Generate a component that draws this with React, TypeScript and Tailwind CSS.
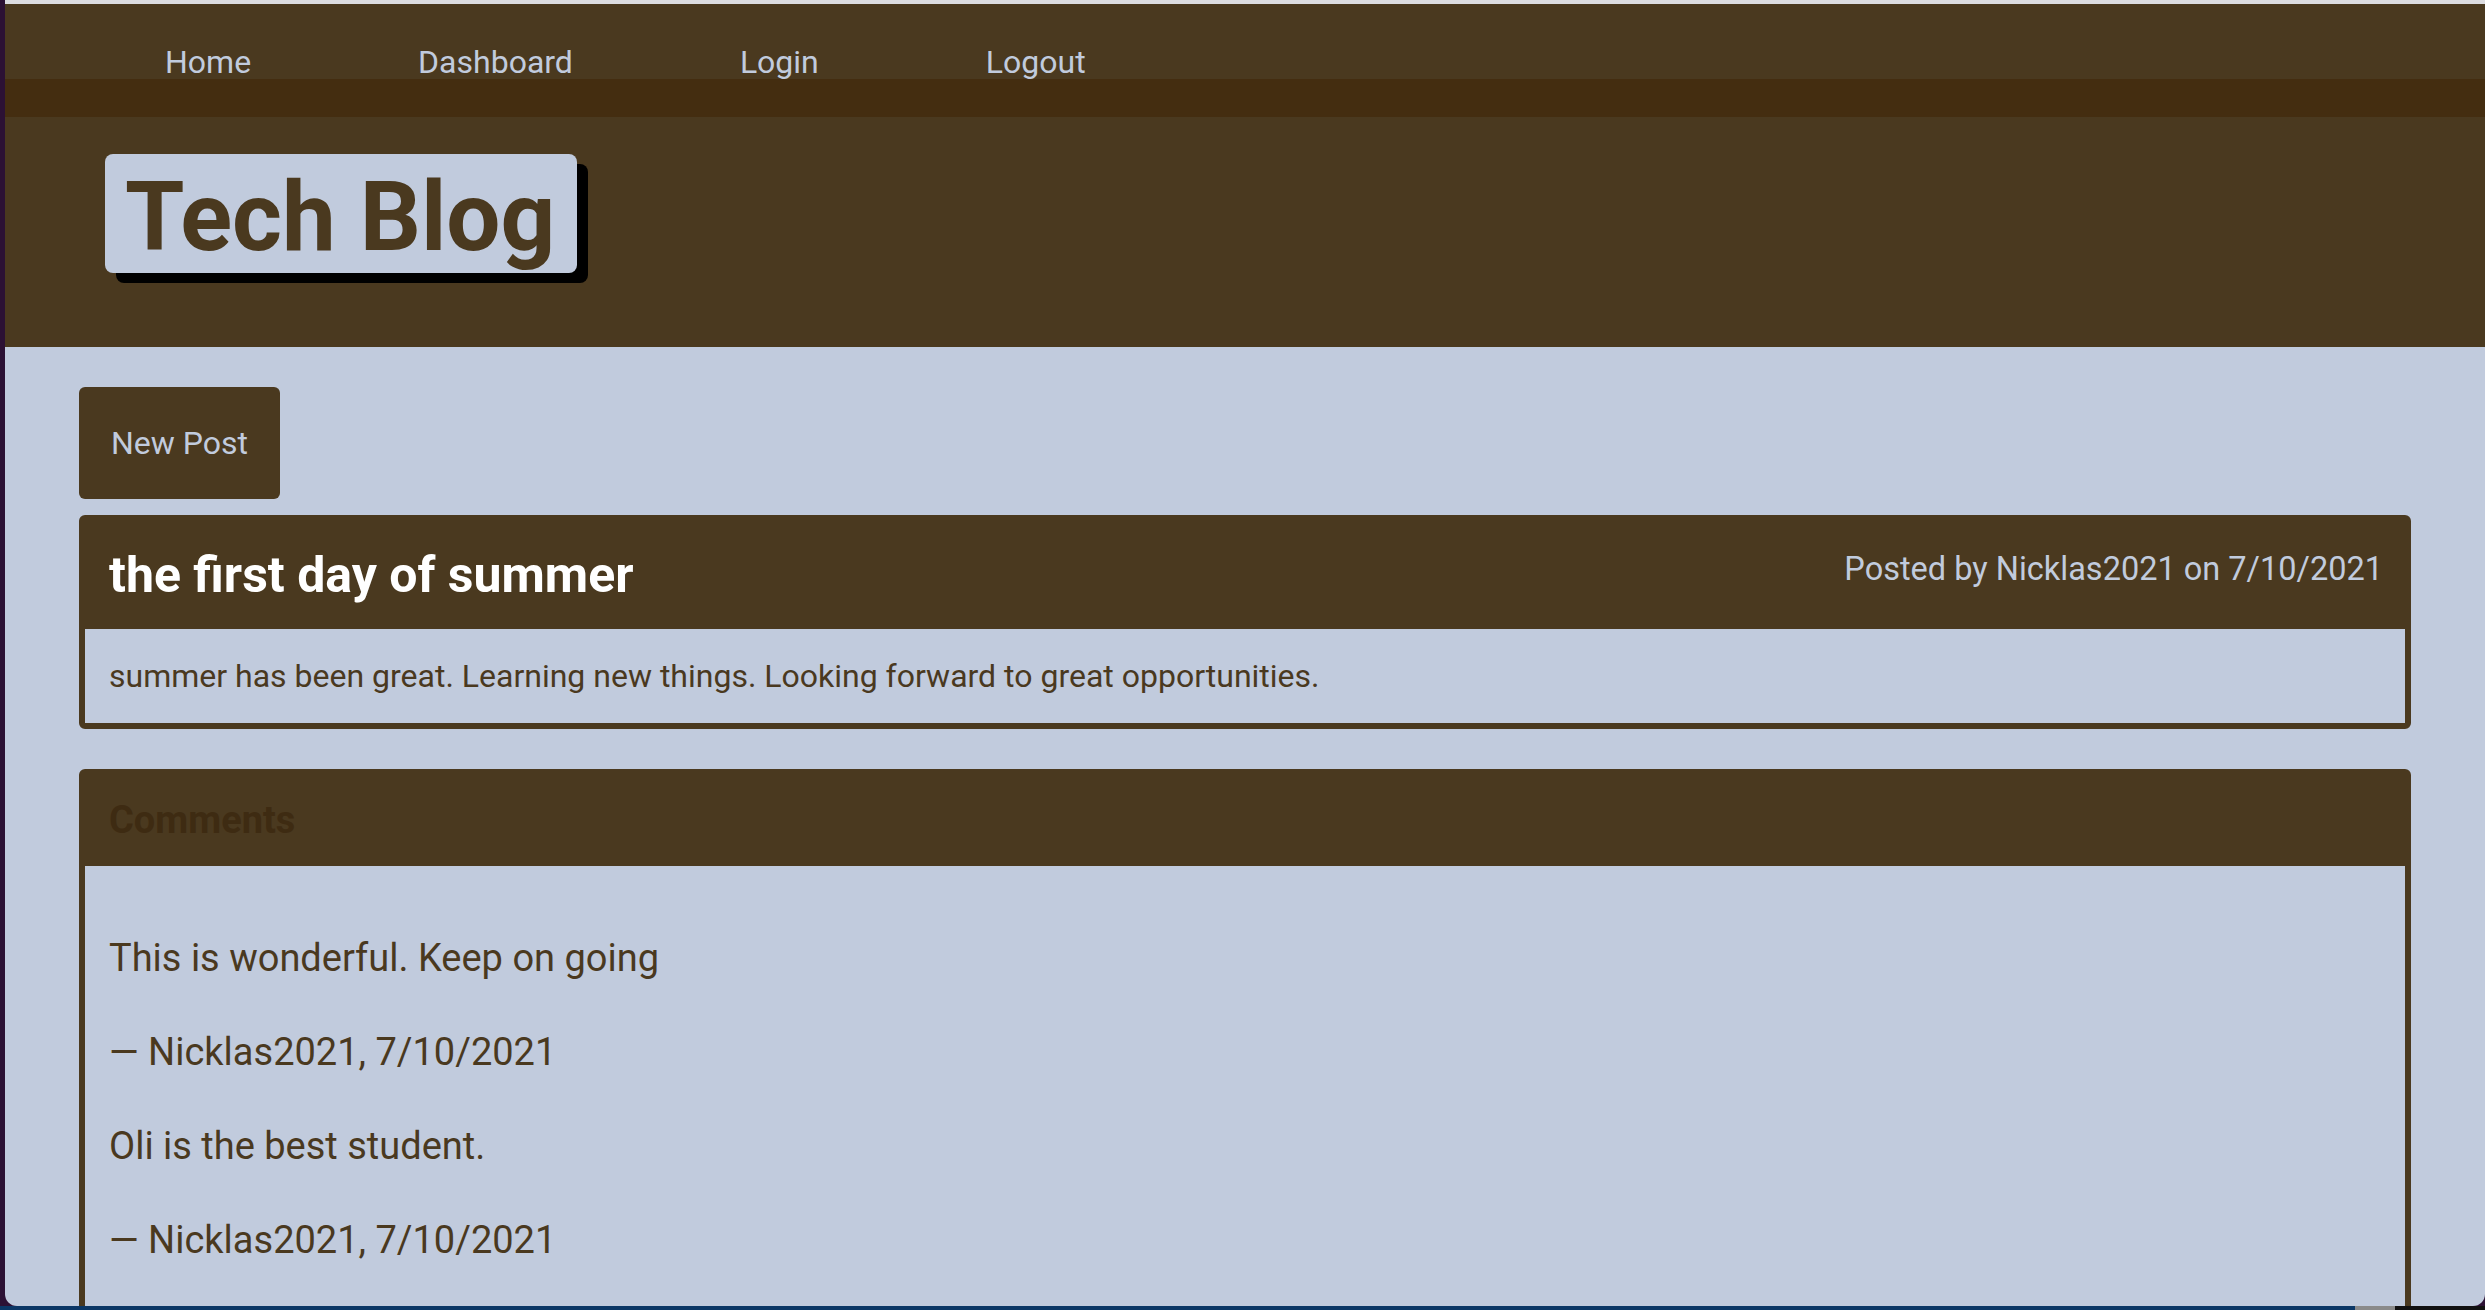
import React from "react";

const navLinks = ["Home", "Dashboard", "Login", "Logout"];

const comments = [
  { text: "This is wonderful. Keep on going", by: "Nicklas2021", date: "7/10/2021" },
  { text: "Oli is the best student.", by: "Nicklas2021", date: "7/10/2021" },
];

const App = () => {
  return (
    <div
      className="h-[1310px] w-full flex flex-col overflow-hidden bg-[#2c1134]"
      style={{ fontFamily: "Roboto, 'Liberation Sans', sans-serif" }}
    >
      <div className="h-[4px] ml-[5px] bg-[#dcdce0] shrink-0" />

      <div className="flex-1 ml-[5px] bg-[#c1cbdd] rounded-b-[12px] overflow-hidden">
        {/* nav */}
        <nav className="h-[75px] bg-[#4a391f] flex pl-[160px] pt-[38px] gap-[167px] text-[32px] leading-[40px] text-[#c1cbdd]">
          {navLinks.map((link) => (
            <a key={link} href="#" className="hover:underline">
              {link}
            </a>
          ))}
        </nav>
        <div className="h-[38px] bg-[#442d10]" />

        {/* header */}
        <header className="h-[230px] bg-[#4a391f] pt-[37px] pl-[100px]">
          <h1 className="inline-block rounded-lg bg-[#c1cbdd] pl-[20px] pr-[22px] pt-[15px] pb-[8px] text-[96px] leading-[96px] font-bold text-[#4a391f] shadow-[11px_10px_0_#000]">
            Tech Blog
          </h1>
        </header>

        <main className="px-[74px] pt-[40px]">
          <button className="h-[112px] px-[32px] rounded-md bg-[#4a391f] text-[32px] text-[#c1cbdd]">
            New Post
          </button>

          {/* post */}
          <section className="mt-[16px] rounded-md border-[6px] border-[#4a391f]">
            <div className="h-[108px] bg-[#4a391f] flex items-center justify-between pl-[24px] pr-[22px]">
              <h2 className="text-[50px] font-bold text-white">the first day of summer</h2>
              <p className="mb-[12px] text-[32.5px] text-[#c1cbdd]">
                Posted by Nicklas2021 on 7/10/2021
              </p>
            </div>
            <div className="h-[94px] flex items-center px-[24px] text-[32px] text-[#4a391f]">
              summer has been great. Learning new things. Looking forward to great opportunities.
            </div>
          </section>

          {/* comments */}
          <section className="mt-[40px] rounded-md border-[6px] border-[#4a391f]">
            <div className="h-[91px] bg-[#4a391f] flex items-center px-[24px]">
              <h3 className="text-[38px] font-bold text-[#3e2b12]">Comments</h3>
            </div>
            <div className="px-[24px] pt-[63px] pb-[40px] text-[38px] leading-[58px] text-[#4a391f]">
              {comments.map((c, i) => (
                <div key={i}>
                  <p className="mb-[36px]">{c.text}</p>
                  <p className="mb-[36px]">
                    — {c.by}, {c.date}
                  </p>
                </div>
              ))}
            </div>
          </section>
        </main>
      </div>

      <div className="h-[4px] shrink-0 flex">
        <div className="w-[2355px] bg-[#0b3766]" />
        <div className="w-[40px] bg-[#8a8a8a]" />
        <div className="flex-1 bg-[#111]" />
      </div>
    </div>
  );
};

export default App;
